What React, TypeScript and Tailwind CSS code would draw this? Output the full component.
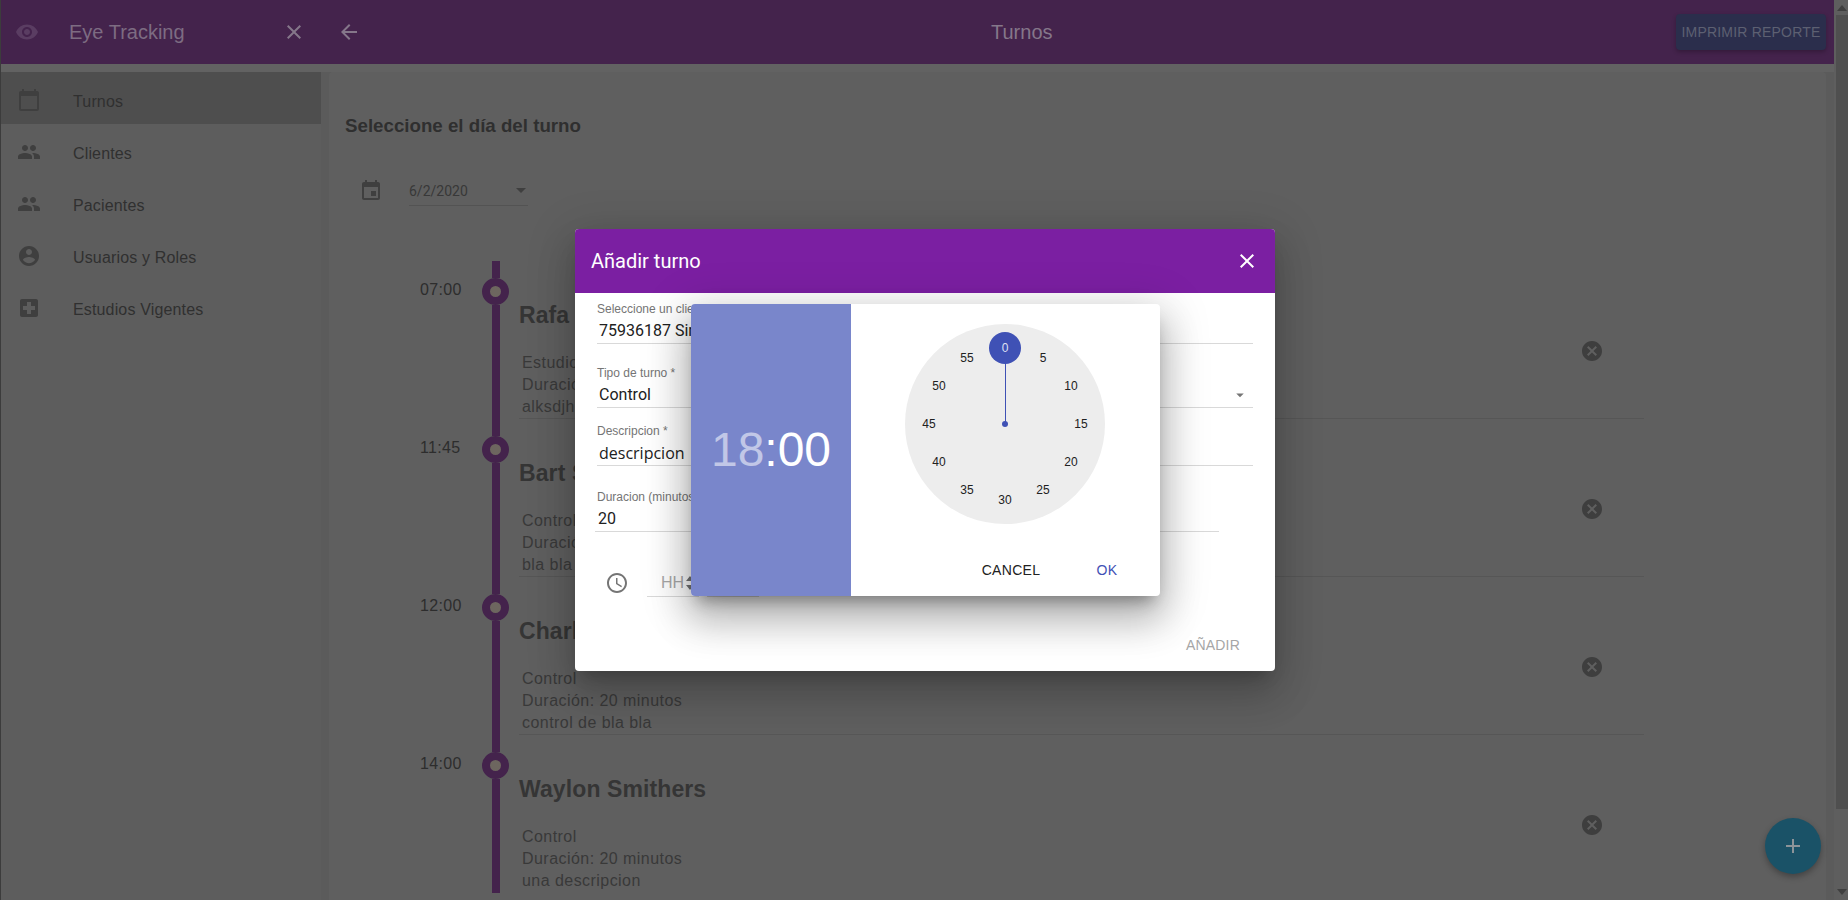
import React from "react";

const P = {
  eye: "M12 4.5C7 4.5 2.73 7.61 1 12c1.73 4.39 6 7.5 11 7.5s9.27-3.11 11-7.5c-1.73-4.39-6-7.5-11-7.5zM12 17c-2.76 0-5-2.24-5-5s2.24-5 5-5 5 2.24 5 5-2.24 5-5 5zm0-8c-1.66 0-3 1.34-3 3s1.34 3 3 3 3-1.34 3-3-1.34-3-3-3z",
  today: "M20 3h-1V1h-2v2H7V1H5v2H4c-1.1 0-2 .9-2 2v16c0 1.1.9 2 2 2h16c1.1 0 2-.9 2-2V5c0-1.1-.9-2-2-2zm0 18H4V8h16v13z",
  people: "M16 11c1.66 0 2.99-1.34 2.99-3S17.66 5 16 5c-1.66 0-3 1.34-3 3s1.34 3 3 3zm-8 0c1.66 0 2.99-1.34 2.99-3S9.66 5 8 5C6.34 5 5 6.34 5 8s1.34 3 3 3zm0 2c-2.33 0-7 1.17-7 3.5V19h14v-2.5c0-2.33-4.67-3.5-7-3.5zm8 0c-.29 0-.62.02-.97.05 1.16.84 1.97 1.97 1.97 3.45V19h6v-2.5c0-2.33-4.67-3.5-7-3.5z",
  account: "M12 2C6.48 2 2 6.48 2 12s4.48 10 10 10 10-4.48 10-10S17.52 2 12 2zm0 3c1.66 0 3 1.34 3 3s-1.34 3-3 3-3-1.34-3-3 1.34-3 3-3zm0 14.2c-2.5 0-4.71-1.28-6-3.22.03-1.99 4-3.08 6-3.08 1.99 0 5.97 1.09 6 3.08-1.29 1.94-3.5 3.22-6 3.22z",
  hospital: "M19 3H5c-1.1 0-1.99.9-1.99 2L3 19c0 1.1.9 2 2 2h14c1.1 0 2-.9 2-2V5c0-1.1-.9-2-2-2zm-1 11h-4v4h-4v-4H6v-4h4V6h4v4h4v4z",
  close: "M19 6.41L17.59 5 12 10.59 6.41 5 5 6.41 10.59 12 5 17.59 6.41 19 12 13.41 17.59 19 19 17.59 13.41 12z",
  back: "M20 11H7.83l5.59-5.59L12 4l-8 8 8 8 1.41-1.41L7.83 13H20v-2z",
  event: "M17 12h-5v5h5v-5zM16 1v2H8V1H6v2H5c-1.11 0-1.99.9-1.99 2L3 19c0 1.1.89 2 2 2h14c1.1 0 2-.9 2-2V5c0-1.1-.9-2-2-2h-1V1h-2zm3 18H5V8h14v11z",
  cancel: "M12 2C6.47 2 2 6.47 2 12s4.47 10 10 10 10-4.47 10-10S17.53 2 12 2zm5 13.59L15.59 17 12 13.41 8.41 17 7 15.59 10.59 12 7 8.41 8.41 7 12 10.59 15.59 7 17 8.41 13.41 12 17 15.59z",
  add: "M19 13h-6v6h-2v-6H5v-2h6V5h2v6h6v2z",
  time: "M11.99 2C6.47 2 2 6.48 2 12s4.47 10 9.99 10C17.52 22 22 17.52 22 12S17.52 2 11.99 2zM12 20c-4.42 0-8-3.58-8-8s3.58-8 8-8 8 3.58 8 8-3.58 8-8 8zm.5-13H11v6l5.25 3.15.75-1.23-4.5-2.67z",
  drop: "M7 10l5 5 5-5z",
};

function Icon({ d, className }: { d: string; className: string }) {
  return (
    <svg viewBox="0 0 24 24" fill="currentColor" className={`shrink-0 ${className}`}>
      <path d={d} />
    </svg>
  );
}

const nav = [
  { label: "Turnos", icon: P.today, active: true },
  { label: "Clientes", icon: P.people },
  { label: "Pacientes", icon: P.people },
  { label: "Usuarios y Roles", icon: P.account },
  { label: "Estudios Vigentes", icon: P.hospital },
];

const turnos = [
  { t: "07:00", name: "Rafa Gorgory", lines: ["Estudio de control", "Duración: 20 minutos", "alksdjhaskdjh"] },
  { t: "11:45", name: "Bart Simpson", lines: ["Control", "Duración: 20 minutos", "bla bla bla"] },
  { t: "12:00", name: "Charles Burns", lines: ["Control", "Duración: 20 minutos", "control de bla bla"] },
  { t: "14:00", name: "Waylon Smithers", lines: ["Control", "Duración: 20 minutos", "una descripcion"] },
];

const minutes = [0, 5, 10, 15, 20, 25, 30, 35, 40, 45, 50, 55];

function Field({ label, value, className, arrow, input, wide }: { label: string; value: string; className: string; arrow?: boolean; input?: boolean; wide?: boolean }) {
  return (
    <div className={`border-b border-[#d9d9d9] h-[44px] ${className}`}>
      <div className={`h-4 leading-4 text-[12px] text-[#757575] pt-[1px] font-['Liberation_Sans',sans-serif] ${wide ? "pl-[2px]" : ""}`}>{label}</div>
      <div className={`h-[27px] flex items-center justify-between pt-[2px] text-[16px] text-[#212121] ${wide ? "pl-[3px]" : "pl-[2px]"} ${input ? "font-['Open_Sans',sans-serif]" : ""}`}>
        <span>{value}</span>
        {arrow && <Icon d={P.drop} className="w-[18px] h-[18px] text-[#757575] mr-1" />}
      </div>
    </div>
  );
}

export default function App() {
  return (
    <div className="relative w-[1848px] h-[900px] overflow-hidden flex bg-[#626262] font-['Roboto',sans-serif]">
      {/* page */}
      <div className="w-[1px] bg-[#3c3c3c]" />
      <div className="w-[320px] flex flex-col font-['Liberation_Sans',sans-serif]">
        <div className="h-16 bg-[#44234c] flex items-center pl-[14px] pr-[15px]">
          <Icon d={P.eye} className="w-6 h-6 text-[#5a3d62]" />
          <span className="ml-[30px] text-[20px] text-[#7d6c82]">Eye Tracking</span>
          <Icon d={P.close} className="w-6 h-6 ml-auto text-[#85778a]" />
        </div>
        <div className="h-2" />
        <div className="flex-1 bg-[#5d5d5d]">
          {nav.map((n) => (
            <div key={n.label} className={`h-[52px] flex items-center pl-[16px] pt-1 ${n.active ? "bg-[#4e4e4e]" : ""}`}>
              <Icon d={n.icon} className="w-6 h-6 text-[#3f3f3f]" />
              <span className="ml-8 pt-[3px] text-[16px] tracking-[0.15px] text-[#303030]">{n.label}</span>
            </div>
          ))}
        </div>
      </div>
      <div className="w-[1513px] flex flex-col">
        <div className="h-16 bg-[#44234c] flex items-center pl-4 pr-2 font-['Liberation_Sans',sans-serif]">
          <Icon d={P.back} className="w-6 h-6 text-[#85778a]" />
          <span className="ml-[630px] text-[20px] text-[#85778a]">Turnos</span>
          <div className="ml-auto w-[150px] h-9 rounded bg-[#2b2e4c] shadow-[0_2px_4px_rgba(0,0,0,0.25)] flex items-center justify-center text-[14px] tracking-[0.2px] text-[#5d6072]">
            IMPRIMIR REPORTE
          </div>
        </div>
        <div className="h-2" />
        <div className="flex-1 flex bg-[#5b5b5b]">
          <div className="ml-2 w-[1497px] bg-[#5f5f5f] pt-[43px] font-['Liberation_Sans',sans-serif] rounded-t">
            <h3 className="ml-4 text-[18.72px] leading-[22px] font-bold text-[#2f2f2f]">Seleccione el día del turno</h3>
            <div className="mt-[41px] ml-[30px] flex items-start">
              <Icon d={P.event} className="w-6 h-6 mt-[1px] text-[#3f3f3f]" />
              <div className="ml-[26px] w-[119px] h-[28px] border-b border-[#535353] flex items-center font-['Roboto',sans-serif] text-[14px] text-[#383838]">
                <span>6/2/2020</span>
                <Icon d={P.drop} className="w-6 h-6 ml-auto -mr-[5px] -mt-[4px] text-[#3f3f3f]" />
              </div>
            </div>
            <div className="mt-[55px]">
              {turnos.map((r, i) => (
                <div key={r.t} className="flex h-[158px] ml-[90px]">
                  <div className="w-[63px] pt-[18px] pl-[1px] text-[16px] leading-[22px] tracking-[0.35px] text-[#2d2d2d]">{r.t}</div>
                  <div className="w-[27px] flex flex-col items-start">
                    <div className="w-2 h-[17px] ml-[10px] bg-[#44234c]" />
                    <div className="w-[27px] h-[27px] rounded-full border-[8px] border-[#44234c] bg-[#6d665f]" />
                    <div className="w-2 flex-1 ml-[10px] bg-[#44234c]" />
                  </div>
                  <div className={`ml-[10px] w-[1125px] flex justify-between ${i < 3 ? "border-b border-[#565656]" : ""}`}>
                    <div className="pt-10">
                      <div className="h-7 leading-7 text-[23px] font-bold text-[#353535] tracking-[0.1px]">{r.name}</div>
                      <div className="mt-[23px] pl-[3px] text-[16px] leading-[22px] tracking-[0.45px] text-[#393939]">
                        {r.lines.map((l) => (
                          <div key={l}>{l}</div>
                        ))}
                      </div>
                    </div>
                    <div className="pt-[78px] mr-10">
                      <Icon d={P.cancel} className="w-6 h-6 text-[#3e3e3e]" />
                    </div>
                  </div>
                </div>
              ))}
            </div>
          </div>
        </div>
      </div>
      {/* scrollbar */}
      <div className="w-[14px] bg-[#5e5e5e] flex flex-col items-end">
        <div className="w-[12px] h-[15px] flex items-center justify-center">
          <div className="w-0 h-0 border-x-[5px] border-x-transparent border-b-[6px] border-b-[#3f3f3f]" />
        </div>
        <div className="w-[12px] h-[794px] bg-[#4f4f4f]" />
        <div className="flex-1 w-[12px] flex items-end justify-center pb-[5px]">
          <div className="w-0 h-0 border-x-[5px] border-x-transparent border-t-[6px] border-t-[#3f3f3f]" />
        </div>
      </div>

      {/* floating action button */}
      <div className="absolute left-[1765px] top-[818px] w-14 h-14 rounded-full bg-[#1a5267] shadow-[0_3px_6px_rgba(0,0,0,0.3)] flex items-center justify-center">
        <Icon d={P.add} className="w-6 h-6 text-[#8c9499]" />
      </div>

      {/* add dialog */}
      <div className="absolute left-[575px] top-[229px] w-[700px] h-[442px] bg-white rounded flex flex-col overflow-hidden shadow-[0_11px_15px_-7px_rgba(0,0,0,0.2),0_24px_38px_3px_rgba(0,0,0,0.14),0_9px_46px_8px_rgba(0,0,0,0.12)]">
        <div className="h-16 shrink-0 bg-[#7b1fa2] flex items-center justify-between pl-4 pr-[16px] text-white">
          <span className="text-[20px]">Añadir turno</span>
          <Icon d={P.close} className="w-6 h-6" />
        </div>
        <div className="pt-[7px] flex flex-col">
          <Field className="ml-[22px] w-[656px]" label="Seleccione un cliente *" value="75936187 Simpson" />
          <Field className="ml-[22px] w-[656px] mt-5" label="Tipo de turno *" value="Control" arrow />
          <Field className="ml-[22px] w-[656px] mt-[14px]" label="Descripcion *" value="descripcion" input />
          <Field className="ml-5 w-[624px] mt-[22px]" label="Duracion (minutos) *" value="20" wide />
          <div className="mt-[37px] ml-[30px] flex items-center h-[28px]">
            <Icon d={P.time} className="w-6 h-6 text-[#757575]" />
            <div className="ml-[18px] w-[52px] h-[28px] border-b border-[#d9d9d9] flex items-center pl-[14px] text-[16px] text-[#a8a8a8] font-['Liberation_Sans',sans-serif]">
              <span>HH</span>
              <svg viewBox="0 0 8 16" className="w-2 h-4 ml-[2px] shrink-0 text-[#757575]" fill="currentColor">
                <path d="M4 1l4 5H0zM4 15L0 10h8z" />
              </svg>
            </div>
            <div className="ml-2 w-[52px] h-[28px] border-b border-[#d9d9d9]" />
          </div>
          <div className="mt-[30px] h-9 flex items-center justify-end pr-[35px] text-[14px] tracking-[0.2px] text-[#a6a6a6] font-['Liberation_Sans',sans-serif]">AÑADIR</div>
        </div>
      </div>

      {/* time picker */}
      <div className="absolute left-[691px] top-[304px] w-[469px] h-[292px] bg-white rounded flex overflow-hidden font-['Liberation_Sans',sans-serif] shadow-[0_11px_15px_-7px_rgba(0,0,0,0.35),0_24px_38px_3px_rgba(0,0,0,0.2),0_9px_46px_8px_rgba(0,0,0,0.15)]">
        <div className="w-40 bg-[#7986cb] flex items-center justify-center text-[48px] text-white">
          <span className="opacity-[0.54]">18</span>
          <span>:00</span>
        </div>
        <div className="flex-1 flex flex-col">
          <div className="pt-5 pl-[54px]">
            <div className="relative w-[200px] h-[200px] rounded-full bg-[#ededed]">
              <div className="absolute left-[100px] top-[23px] w-[1px] h-[77px] bg-[#3f51b5]" />
              <div className="absolute left-[97px] top-[97px] w-[6px] h-[6px] rounded-full bg-[#3f51b5]" />
              <div className="absolute left-[84px] top-[8px] w-8 h-8 rounded-full bg-[#3f51b5]" />
              {minutes.map((m) => {
                const a = (m / 60) * 2 * Math.PI;
                return (
                  <div
                    key={m}
                    className={`absolute w-8 h-8 flex items-center justify-center text-[12px] ${m === 0 ? "text-[#dfe2f3]" : "text-[#212121]"}`}
                    style={{ left: 84 + Math.round(76 * Math.sin(a)), top: 84 - Math.round(76 * Math.cos(a)) }}
                  >
                    {m}
                  </div>
                );
              })}
            </div>
          </div>
          <div className="mt-auto mb-2 h-9 flex items-center justify-end pr-[21px] text-[14px] tracking-[0.3px]">
            <div className="w-20 text-center text-[#212121] mr-6">CANCEL</div>
            <div className="w-16 text-center text-[#3f51b5]">OK</div>
          </div>
        </div>
      </div>
    </div>
  );
}
